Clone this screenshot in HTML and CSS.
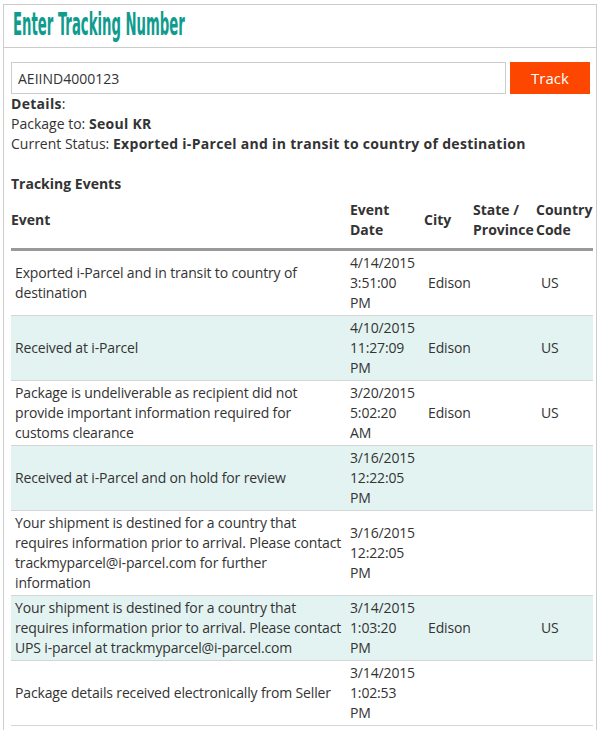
FILE: index.html
```html
<!DOCTYPE html>
<html lang="en">
<head>
  <meta charset="utf-8" />
  <title>Enter Tracking Number</title>
  <link rel="stylesheet" href="styles.css">
</head>
<body>
  <div class="panel">
    <h1 class="panel-title"><span>Enter Tracking Number</span></h1>
    <div class="panel-body">
      <form class="track-form">
        <input class="track-input" type="text" value="AEIIND4000123">
        <button class="track-btn" type="button">Track</button>
      </form>
      <div class="details">
        <div><b>Details</b>:</div>
        <div>Package to: <b>Seoul KR</b></div>
        <div>Current Status: <b>Exported i-Parcel and in transit to country of destination</b></div>
      </div>
      <h4 class="events-title">Tracking Events</h4>
      <table class="events">
        <colgroup>
          <col class="c-event"><col class="c-date"><col class="c-city"><col class="c-state"><col class="c-country">
        </colgroup>
        <thead>
          <tr>
            <th class="first">Event</th>
            <th>Event Date</th>
            <th>City</th>
            <th>State / Province</th>
            <th>Country Code</th>
          </tr>
        </thead>
        <tbody>
          <tr>
            <td>Exported i-Parcel and in transit to country of destination</td>
            <td>4/14/2015 3:51:00 PM</td>
            <td class="city">Edison</td>
            <td></td>
            <td class="country">US</td>
          </tr>
          <tr class="alt">
            <td>Received at i-Parcel</td>
            <td>4/10/2015 11:27:09 PM</td>
            <td class="city">Edison</td>
            <td></td>
            <td class="country">US</td>
          </tr>
          <tr>
            <td>Package is undeliverable as recipient did not provide important information required for customs clearance</td>
            <td>3/20/2015 5:02:20 AM</td>
            <td class="city">Edison</td>
            <td></td>
            <td class="country">US</td>
          </tr>
          <tr class="alt">
            <td>Received at i-Parcel and on hold for review</td>
            <td>3/16/2015 12:22:05 PM</td>
            <td class="city"></td>
            <td></td>
            <td class="country"></td>
          </tr>
          <tr>
            <td>Your shipment is destined for a country that requires information prior to arrival. Please contact trackmyparcel@i-parcel.com for further information</td>
            <td>3/16/2015 12:22:05 PM</td>
            <td class="city"></td>
            <td></td>
            <td class="country"></td>
          </tr>
          <tr class="alt">
            <td>Your shipment is destined for a country that requires information prior to arrival. Please contact UPS i-parcel at trackmyparcel@i-parcel.com</td>
            <td>3/14/2015 1:03:20 PM</td>
            <td class="city">Edison</td>
            <td></td>
            <td class="country">US</td>
          </tr>
          <tr>
            <td>Package details received electronically from Seller</td>
            <td>3/14/2015 1:02:53 PM</td>
            <td class="city"></td>
            <td></td>
            <td class="country"></td>
          </tr>
        </tbody>
      </table>
    </div>
  </div>
</body>
</html>
```

FILE: styles.css
```css
body { margin: 4px 6px 0 3px; font-family: 'Open Sans', 'Noto Sans', sans-serif; font-size: 14px; line-height: 20px; color: #333; background: #fff; }
.panel { border: 1px solid #ccc; border-bottom: none; min-height: 760px; }
.panel-title { margin: 0; height: 38px; padding-bottom: 4px; border-bottom: 1px solid #ccc; overflow: hidden; white-space: nowrap; }
.panel-title span { display: inline-block; margin-left: 9px; font-family: 'DejaVu Sans Condensed', 'DejaVu Sans', sans-serif; font-weight: bold; font-size: 32px; line-height: 38px; color: #0f9b8e; transform: scaleX(0.46); transform-origin: left center; }
.panel-body { padding: 14px 6px 0 7px; }
.track-form { display: flex; gap: 4px; margin: 0; }
.track-input { flex: 1; height: 32px; box-sizing: border-box; border: 1px solid #ccc; padding: 0 6px; font-family: inherit; font-size: 14px; color: #333; outline: none; }
.track-btn { width: 80px; height: 32px; border: none; background: #fd4600; color: #fff; font-family: inherit; font-size: 15px; padding: 0; }
.details b { font-weight: 700; letter-spacing: 0.3px; }
.events-title { margin: 20px 0 0 0; font-size: 14px; font-weight: 700; line-height: 20px; }
.events { width: 582px; table-layout: fixed; border-collapse: collapse; }
.c-event { width: 335px; }
.c-date { width: 74px; }
.c-city { width: 49px; }
.c-state { width: 63px; }
.c-country { width: 61px; }
.events th { text-align: left; font-weight: 700; vertical-align: middle; padding: 6px 0 8px 4px; border-bottom: 3px solid #999; }
.events th.first { padding-left: 0; }
.events td { vertical-align: middle; padding: 2px 4px; border-bottom: 1px solid #d5d5d5; letter-spacing: -0.15px; }
.events td:first-child { padding-right: 3px; }
.events td.city { padding-left: 8px; }
.events td.country { padding-left: 9px; }
.events tr.alt td { background: #e3f3f2; }
```
